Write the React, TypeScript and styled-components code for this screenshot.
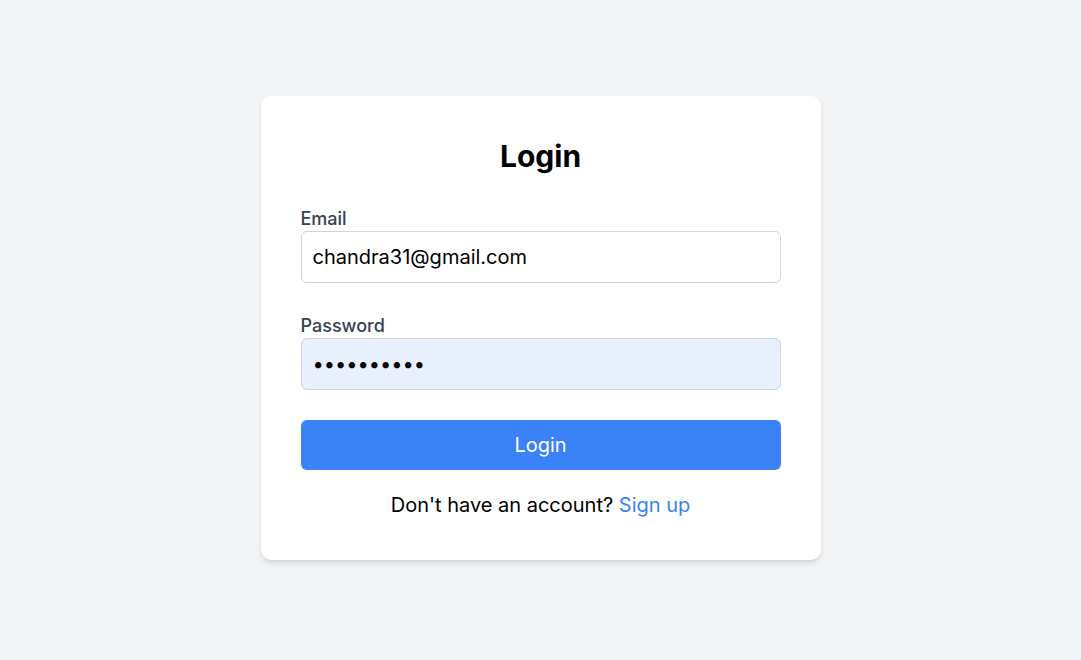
import React, { useState } from 'react'
import styled, { createGlobalStyle } from 'styled-components'

const GlobalStyle = createGlobalStyle`
  html, body {
    margin: 0;
    padding: 0;
    background: #f3f4f6;
    font-family: Inter, 'Noto Sans', sans-serif;
  }
  * {
    box-sizing: border-box;
  }
`

const Page = styled.div`
  width: 100%;
  min-height: 660px;
  display: flex;
  justify-content: center;
  padding-top: 96px;
`

const Card = styled.form`
  width: 560px;
  height: 464px;
  background: #ffffff;
  border-radius: 10px;
  padding: 40px;
  box-shadow: 0 4px 6px -1px rgba(0, 0, 0, 0.1), 0 2px 4px -2px rgba(0, 0, 0, 0.1);
  display: flex;
  flex-direction: column;
`

const Title = styled.h1`
  margin: 0 0 30px 0;
  font-size: 30px;
  line-height: 40px;
  font-weight: 700;
  text-align: center;
  color: #000;
`

const Field = styled.div`
  display: flex;
  flex-direction: column;
  margin-bottom: 30px;
`

const Label = styled.label`
  font-size: 18px;
  line-height: 24px;
  font-weight: 500;
  color: #374151;
  margin: 1px 0 0 0;
`

const Input = styled.input<{ $filled?: boolean }>`
  width: 100%;
  height: 52px;
  padding: 0 11px;
  font-family: Inter, sans-serif;
  font-size: 20px;
  color: #000;
  border: 1px solid #d1d5db;
  border-radius: 6px;
  background: ${p => (p.$filled ? '#e8f0fe' : '#ffffff')};
  outline: none;
`

const Button = styled.button`
  width: 100%;
  height: 50px;
  border: none;
  border-radius: 6px;
  background: #3b82f6;
  color: #ffffff;
  font-family: Inter, sans-serif;
  font-size: 20px;
  cursor: pointer;
`

const Footer = styled.p`
  margin: 22px 0 0 0;
  text-align: center;
  font-size: 20px;
  line-height: 27px;
  color: #000;
`

const SignUp = styled.a`
  color: #3b82f6;
  text-decoration: none;
`

export default function App() {
  const [email, setEmail] = useState('chandra31@gmail.com')
  const [password, setPassword] = useState('chandra123')

  return (
    <>
      <GlobalStyle />
      <Page>
        <Card onSubmit={e => e.preventDefault()}>
          <Title>Login</Title>
          <Field>
            <Label htmlFor="email">Email</Label>
            <Input id="email" type="email" value={email} onChange={e => setEmail(e.target.value)} />
          </Field>
          <Field>
            <Label htmlFor="password">Password</Label>
            <Input
              id="password"
              type="password"
              $filled
              value={password}
              onChange={e => setPassword(e.target.value)}
            />
          </Field>
          <Button type="submit">Login</Button>
          <Footer>
            Don't have an account? <SignUp href="#">Sign up</SignUp>
          </Footer>
        </Card>
      </Page>
    </>
  )
}
